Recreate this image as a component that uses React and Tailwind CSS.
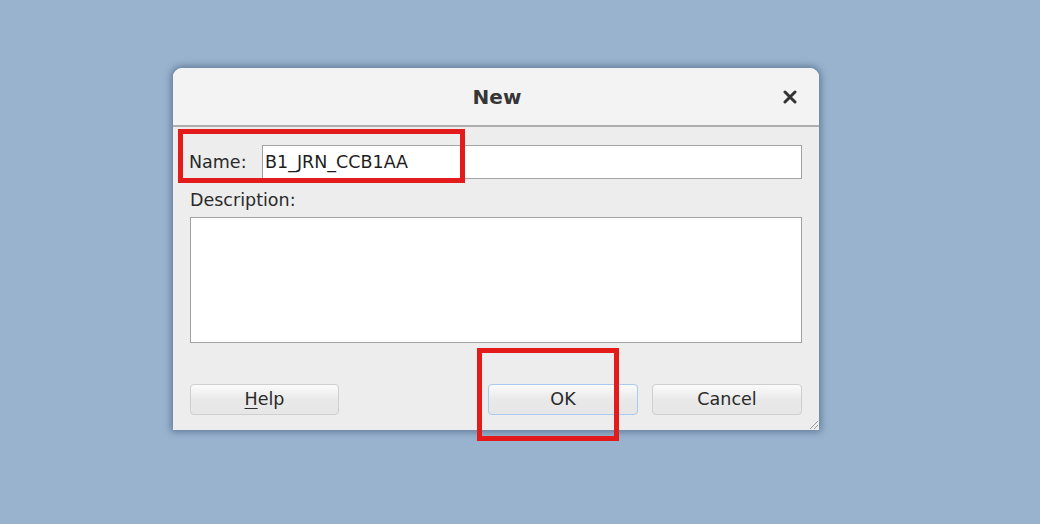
const FONT = { fontFamily: '"DejaVu Sans", Verdana, sans-serif' };

function Button({ children, focused, w }) {
  return (
    <button
      className={`${w} h-[31px] rounded-[4px] border text-[17.5px] text-[#2a2a2a] bg-gradient-to-b from-[#fbfbfb] via-[#e9e9e9] to-[#e6e6e6] ${
        focused ? "border-[#a9c9ee]" : "border-[#cfcfcf]"
      }`}
    >
      {children}
    </button>
  );
}

export default function App() {
  return (
    <div className="w-[1040px] h-[524px] bg-[#99b3cf] pt-[68px] pl-[173px] overflow-hidden" style={FONT}>
      <div className="relative w-[646px] h-[362px] rounded-t-[9px] bg-[#ededed] shadow-[0_0_7px_2px_rgba(60,85,115,0.6)] flex flex-col">
        {/* title bar */}
        <div className="h-[59px] rounded-t-[9px] bg-[#f3f3f3] border-b-2 border-[#adadad] flex items-center justify-center relative">
          <span className="text-[20px] font-bold text-[#363636] ml-[2px]">New</span>
          <svg className="absolute right-[22px] top-[22px] w-[14px] h-[14px]" viewBox="0 0 14 14">
            <path d="M2 2L12 12M12 2L2 12" stroke="#333" strokeWidth="3" strokeLinecap="round" />
          </svg>
        </div>

        {/* body */}
        <div className="flex-1 flex flex-col px-[16px] pt-[18px] pb-[15px] text-[#2a2a2a]">
          <div className="flex items-center h-[34px] mr-[1px]">
            <span className="w-[73px] text-[17.5px]">Name:</span>
            <div className="flex-1 h-[34px] bg-white border border-[#a3a3a3] flex items-center pl-[2px] text-[17.5px] text-[#1e1e1e]">
              B1_JRN_CCB1AA
            </div>
          </div>
          <div className="mt-[11px] ml-[1px] text-[17.5px] leading-[20px]">Description:</div>
          <div className="mt-[7px] ml-[1px] mr-[1px] h-[126px] bg-white border border-[#a3a3a3]" />

          <div className="mt-auto flex items-center ml-[1px] mr-[1px]">
            <Button w="w-[149px]">
              <span className="underline underline-offset-[3px]">H</span>elp
            </Button>
            <div className="ml-auto flex gap-[14px]">
              <Button w="w-[150px]" focused>OK</Button>
              <Button w="w-[150px]">Cancel</Button>
            </div>
          </div>
        </div>

        {/* resize grip */}
        <svg className="absolute right-0 bottom-0 w-[12px] h-[12px]" viewBox="0 0 12 12">
          <path d="M11 3L3 11M11 7L7 11" stroke="#9a9a9a" strokeWidth="1" />
        </svg>

        {/* highlight boxes */}
        <div className="absolute left-[5px] top-[61px] w-[287px] h-[54px] border-[5px] border-[#e41b1b]" />
        <div className="absolute left-[304px] top-[280px] w-[142px] h-[93px] border-[5px] border-[#e41b1b]" />
      </div>
    </div>
  );
}
